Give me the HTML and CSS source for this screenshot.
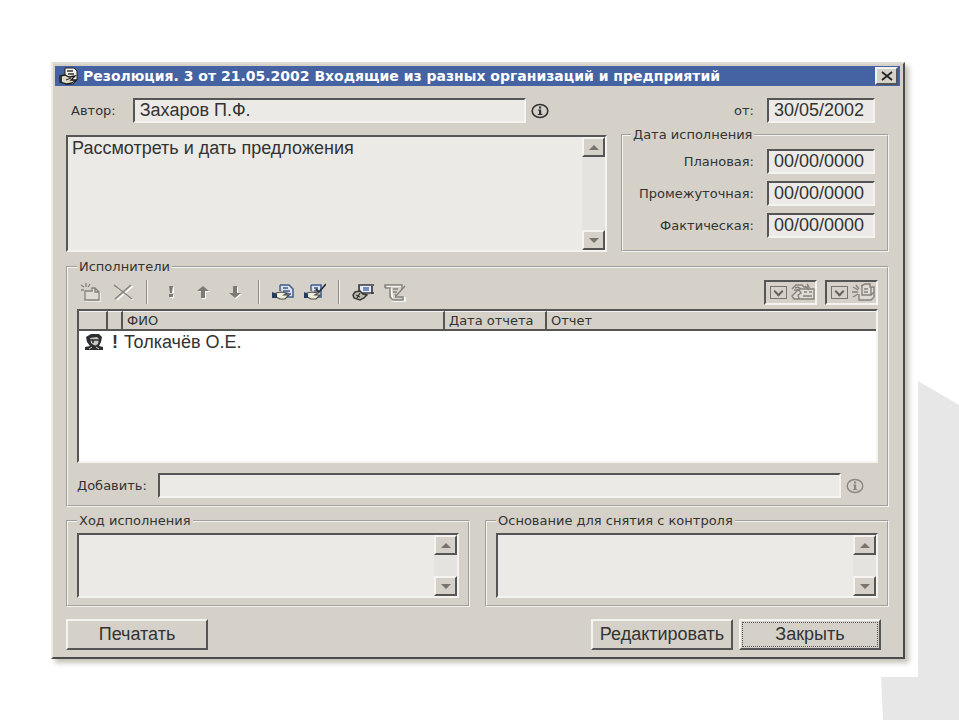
FILE: index.html
```html
<!DOCTYPE html>
<html lang="ru">
<head>
    <meta charset="UTF-8">
    <meta name="viewport" content="width=device-width, initial-scale=1.0">
    <title>Резолюция</title>
    <link rel="stylesheet" href="styles.css">
</head>
<body>
    <svg class="corner" viewBox="0 0 78 339" aria-hidden="true">
        <path d="M37 0L78 24V339H2L0 296H37z" fill="#e7e7e7"/>
    </svg>

    <div class="window">
        <div class="title-bar">
            <svg class="title-icon" viewBox="0 0 20 18" aria-hidden="true">
                <path d="M6 1h9l3 3v9l-4 4H6z" fill="#f4f2e8" stroke="#222" stroke-width="1"/>
                <path d="M8 4h6M9 7h6" fill="none" stroke="#333" stroke-width="1.3"/>
                <path d="M1 9l5-1 4 2 6-1-4 4h5l-4 3-5 1-7-2z" fill="#ddd9c5" stroke="#1c1c1c" stroke-width="1.3"/>
                <path d="M7 13l5-2" stroke="#1c1c1c" stroke-width="1"/>
                <path d="M0 9h3v6H0z" fill="#2d3442"/>
            </svg>
            <h1>Резолюция. 3 от 21.05.2002 Входящие из разных организаций и предприятий</h1>
            <button type="button" class="close" aria-label="Закрыть окно">
                <svg viewBox="0 0 12 10"><path d="M1 1l10 8M11 1L1 9" stroke="#222" stroke-width="1.8"/></svg>
            </button>
        </div>

        <form class="content">
            <div class="author-row">
                <label for="author">Автор:</label>
                <input type="text" id="author" class="author" value="Захаров П.Ф." readonly>
                <button type="button" class="info" aria-label="Информация об авторе">
                    <svg viewBox="0 0 18 16"><ellipse cx="9" cy="8" rx="7.8" ry="6.5" fill="none" stroke="currentColor" stroke-width="1.6"/><path d="M8 3.5h2.2v2H8zM7 6.5h3.2v4.5h1.2v1H6.8v-1H8V7.5H7z" fill="currentColor"/></svg>
                </button>
                <label for="date" class="from">от:</label>
                <input type="text" id="date" class="date" value="30/05/2002" readonly>
            </div>

            <div class="top">
                <div class="memo">
                    <textarea aria-label="Текст резолюции" readonly>Рассмотреть и дать предложения</textarea>
                    <div class="scroll">
                        <button type="button" aria-label="Вверх"><svg viewBox="0 0 10 5"><path d="M0 5l5-5 5 5z"/></svg></button>
                        <button type="button" aria-label="Вниз"><svg viewBox="0 0 10 5"><path d="M0 0h10L5 5z"/></svg></button>
                    </div>
                </div>
                <fieldset class="dates">
                    <legend>Дата исполнения</legend>
                    <div class="date-row">
                        <label for="plan">Плановая:</label>
                        <input type="text" id="plan" class="date" value="00/00/0000" readonly>
                    </div>
                    <div class="date-row">
                        <label for="middle">Промежуточная:</label>
                        <input type="text" id="middle" class="date" value="00/00/0000" readonly>
                    </div>
                    <div class="date-row">
                        <label for="fact">Фактическая:</label>
                        <input type="text" id="fact" class="date" value="00/00/0000" readonly>
                    </div>
                </fieldset>
            </div>

            <fieldset class="executors">
                <legend>Исполнители</legend>
                <div class="toolbar">
                    <button type="button" class="tool" aria-label="Создать">
                        <svg viewBox="0 0 22 20">
                            <path d="M5 9v10h14v-9l-4-4h-3v3z" fill="none" stroke="#fff" transform="translate(1 1)"/>
                            <path d="M5 9v9h14V10l-4-4h-3v3zM15 6v4h4" fill="#dedbd4" stroke="#85827c" stroke-width="1.3"/>
                            <path d="M6 1v4M1 3l3 2M10 2L8 5M1 8h3" stroke="#85827c" stroke-width="1.3"/>
                        </svg>
                    </button>
                    <button type="button" class="tool" aria-label="Удалить">
                        <svg viewBox="0 0 22 20">
                            <path d="M3 4l17 13M20 3L4 17" stroke="#fff" stroke-width="1.5" transform="translate(1 1)"/>
                            <path d="M2 3l18 14M19 3L3 17" stroke="#85827c" stroke-width="1.5"/>
                        </svg>
                    </button>
                    <span class="separator"></span>
                    <button type="button" class="tool" aria-label="Важно">
                        <svg viewBox="0 0 22 20">
                            <path d="M10 5h4v6h-4zM10 13h4v3h-4z" fill="#fff"/>
                            <path d="M9 4h4l-1 7h-2zM9 12h4v3H9z" fill="#7d7a75"/>
                        </svg>
                    </button>
                    <button type="button" class="tool" aria-label="Переместить вверх">
                        <svg viewBox="0 0 22 20">
                            <path d="M12 5l6 5h-4v7h-4v-7H6z" fill="#fff"/>
                            <path d="M11 4l6 5h-4v7H9V9H5z" fill="#7d7a75"/>
                        </svg>
                    </button>
                    <button type="button" class="tool" aria-label="Переместить вниз">
                        <svg viewBox="0 0 22 20">
                            <path d="M12 17l6-5h-4V5h-4v7H6z" fill="#fff"/>
                            <path d="M11 16l6-5h-4V4H9v7H5z" fill="#7d7a75"/>
                        </svg>
                    </button>
                    <span class="separator"></span>
                    <button type="button" class="tool" aria-label="Передать документ">
                        <svg viewBox="0 0 22 20">
                            <path d="M8 3h9l4 4v8h-7" fill="#dce3ef" stroke="#3d5b8d" stroke-width="1.5"/>
                            <path d="M8 3v6M11 6h5M11 9h7M14 12h5" stroke="#3d5b8d" stroke-width="1.4"/>
                            <path d="M4 11l5-1 6 1-3 2h5l-4 4H8l-4-2z" fill="#efedda" stroke="#4a4b48" stroke-width="1.2"/>
                            <path d="M0 10l5 2v4H0z" fill="#263a5c"/>
                        </svg>
                    </button>
                    <button type="button" class="tool" aria-label="Передать и подписать">
                        <svg viewBox="0 0 22 20">
                            <path d="M7 3h10v12h-5" fill="#dce3ef" stroke="#3d5b8d" stroke-width="1.5"/>
                            <path d="M7 3v6M10 6h4M10 9h4" stroke="#3d5b8d" stroke-width="1.4"/>
                            <path d="M3 11l5-1 6 1-3 2h5l-4 4H7l-4-2z" fill="#efedda" stroke="#4a4b48" stroke-width="1.2"/>
                            <path d="M0 10l4 2v4H0z" fill="#263a5c"/>
                            <path d="M22 2l-7 8-3-3" fill="none" stroke="#2b2e33" stroke-width="1.8"/>
                        </svg>
                    </button>
                    <span class="separator"></span>
                    <button type="button" class="tool" aria-label="Отчет исполнителя">
                        <svg viewBox="0 0 22 20">
                            <path d="M7 3h14v9H10z" fill="#e8edf6"/>
                            <path d="M22 3H7v7M10 11h12M20 4v8" fill="none" stroke="#363b44" stroke-width="1.7"/>
                            <path d="M11 6h6M11 8h6" stroke="#4d70ad" stroke-width="1.4"/>
                            <path d="M3 10l5-1 3 3 4 1-3 3-4 2-6-2-1-3z" fill="#bebcb0" stroke="#363633" stroke-width="1.5"/>
                            <path d="M4 13l4 2M8 11l-3 5" stroke="#363633" stroke-width="1.3"/>
                        </svg>
                    </button>
                    <button type="button" class="tool" aria-label="Изменить отчет">
                        <svg viewBox="0 0 22 20">
                            <path d="M2 3h15v2M4 3v3h2l2 12h12v-3h-3" fill="none" stroke="#fff" stroke-width="1.5" transform="translate(1 1)"/>
                            <path d="M1 6V3h17v4M4 6h2v9l3 3h10v-3h-8M1 6h3" fill="none" stroke="#85827c" stroke-width="1.5"/>
                            <path d="M21 4l-9 10-1-2M9 7h5M9 10h4" fill="none" stroke="#85827c" stroke-width="1.4"/>
                        </svg>
                    </button>
                    <div class="toggles">
                        <label class="toggle">
                            <input type="checkbox" aria-label="Показать карточку" checked>
                            <svg viewBox="0 0 24 18" aria-hidden="true">
                                <path d="M1 6l4-4h6l2 2h5l-2-3M8 6h15v10H3l-2-3z" fill="#dedbd4" stroke="#85827c" stroke-width="1.4"/>
                                <path d="M3 7h5l2 3-3 2 1 4M4 5l3-1 3 2M13 9h3M18 9h3M12 13h9M14 3l4 4" fill="none" stroke="#85827c" stroke-width="1.4"/>
                            </svg>
                        </label>
                        <label class="toggle">
                            <input type="checkbox" aria-label="Показать связки" checked>
                            <svg viewBox="0 0 24 18" aria-hidden="true">
                                <path d="M9 3l4-2h5v3h4v10l-3 3H7v-6" fill="#dedbd4" stroke="#85827c" stroke-width="1.4"/>
                                <path d="M10 2v10h9V4M19 12l3-3M12 6h4M12 9h4M1 4l5 3M0 9h6M1 14l5-3M4 2l3 4" fill="none" stroke="#85827c" stroke-width="1.4"/>
                            </svg>
                        </label>
                    </div>
                </div>

                <div class="list">
                    <table>
                        <colgroup>
                            <col class="col-icon">
                            <col class="col-mark">
                            <col class="col-name">
                            <col class="col-date">
                            <col>
                        </colgroup>
                        <thead>
                            <tr>
                                <th></th>
                                <th></th>
                                <th>ФИО</th>
                                <th>Дата отчета</th>
                                <th>Отчет</th>
                            </tr>
                        </thead>
                        <tbody>
                            <tr>
                                <td>
                                    <svg class="person" viewBox="0 0 20 18" aria-hidden="true">
                                        <path d="M2 4l5-3h8l3 3-1 5-2 4 4 1v3H1v-3l5-1-3-4z" fill="#2c2e31"/>
                                        <path d="M6 5l7-1 2 2-1 5-3 2-4-3z" fill="#c9c8c2"/>
                                        <path d="M4 7h12M9 7v3M7 14l3-1 3 1" stroke="#2c2e31" stroke-width="1.6"/>
                                        <path d="M5 16l3-2M15 16l-3-2" stroke="#d6d6d0" stroke-width="1"/>
                                    </svg>
                                </td>
                                <td class="mark">!</td>
                                <td>Толкачёв О.Е.</td>
                                <td></td>
                                <td></td>
                            </tr>
                        </tbody>
                    </table>
                </div>

                <div class="add-row">
                    <label for="add">Добавить:</label>
                    <input type="text" id="add">
                    <button type="button" class="info" aria-label="Справочник" disabled>
                        <svg viewBox="0 0 18 16"><ellipse cx="9" cy="8" rx="7.8" ry="6.5" fill="none" stroke="currentColor" stroke-width="1.4"/><path d="M8 3.5h2.2v2H8zM7 6.5h3.2v4.5h1.2v1H6.8v-1H8V7.5H7z" fill="currentColor"/></svg>
                    </button>
                </div>
            </fieldset>

            <div class="bottom">
                <fieldset>
                    <legend>Ход исполнения</legend>
                    <div class="memo small">
                        <textarea aria-label="Ход исполнения" readonly></textarea>
                        <div class="scroll">
                            <button type="button" aria-label="Вверх"><svg viewBox="0 0 10 5"><path d="M0 5l5-5 5 5z"/></svg></button>
                            <button type="button" aria-label="Вниз"><svg viewBox="0 0 10 5"><path d="M0 0h10L5 5z"/></svg></button>
                        </div>
                    </div>
                </fieldset>
                <fieldset>
                    <legend>Основание для снятия с контроля</legend>
                    <div class="memo small">
                        <textarea aria-label="Основание для снятия с контроля" readonly></textarea>
                        <div class="scroll">
                            <button type="button" aria-label="Вверх"><svg viewBox="0 0 10 5"><path d="M0 5l5-5 5 5z"/></svg></button>
                            <button type="button" aria-label="Вниз"><svg viewBox="0 0 10 5"><path d="M0 0h10L5 5z"/></svg></button>
                        </div>
                    </div>
                </fieldset>
            </div>

            <div class="actions">
                <button type="button" class="btn print">Печатать</button>
                <button type="button" class="btn">Редактировать</button>
                <button type="button" class="btn focused">Закрыть</button>
            </div>
        </form>
    </div>
</body>
</html>
```
FILE: styles.css
```css
* {
    box-sizing: border-box;
}

body {
    margin: 0;
    padding: 62px 54px 16px 51px;
    min-height: 100vh;
    background-color: #fff;
    color: #333;
    font-family: "DejaVu Sans", Verdana, sans-serif;
    font-size: 13px;
    line-height: 16px;
}

/* grey shape in the corner of the slide */
.corner {
    position: absolute;
    right: 0;
    bottom: 0;
    width: 78px;
    height: 339px;
}

.window {
    position: relative;
    padding: 2px 3px 7px 2px;
    background-color: #d5d1c9;
    border: 2px solid;
    border-color: #dedcd6 #4b4b4b #4b4b4b #eeece6;
    box-shadow: 4px 4px 5px #c4c2b8;
}

.title-bar {
    display: flex;
    align-items: center;
    gap: 4px;
    height: 20px;
    padding: 0 2px 0 4px;
    background-color: #4562a2;
}

.title-icon {
    width: 20px;
    height: 18px;
}

h1 {
    flex: 1;
    margin: 0;
    overflow: hidden;
    color: #fff;
    font-size: 14px;
    line-height: 20px;
    white-space: nowrap;
}

button {
    padding: 0;
    color: #333;
    font-family: inherit;
    background-color: #d5d1c9;
    border: 2px solid;
    border-color: #f4f3ef #555 #555 #f4f3ef;
}

button svg {
    display: block;
    margin: auto;
}

.close {
    width: 23px;
    height: 18px;
}

.close svg {
    width: 12px;
    height: 10px;
}

.content {
    padding: 12px 11px 0;
}

input[type="text"],
.memo textarea,
td,
.btn {
    font-family: "Liberation Sans", Arial, sans-serif;
    font-size: 18px;
}

input[type="text"] {
    min-width: 0;
    height: 25px;
    padding: 0 5px;
    color: #333;
    background-color: #ebeae6;
    border: 2px solid;
    border-color: #555 #f4f3ef #f4f3ef #555;
    border-radius: 0;
}

.author-row {
    display: flex;
    align-items: center;
    padding: 0 14px 0 5px;
}

.author-row .author {
    width: 393px;
    margin-left: 17px;
}

.info {
    width: 20px;
    margin-left: 4px;
    background: none;
    border: none;
}

.info svg {
    width: 18px;
    height: 16px;
}

.info:disabled {
    color: #8a8782;
}

.from {
    margin-left: auto;
}

.date {
    width: 108px;
    margin-left: 13px;
}

.top {
    display: grid;
    grid-template-columns: 1fr 268px;
    gap: 14px;
    margin-top: 4px;
}

.memo {
    display: flex;
    margin-top: 8px;
    background-color: #ebeae6;
    border: 2px solid;
    border-color: #555 #f4f3ef #f4f3ef #555;
}

.memo textarea {
    flex: 1;
    min-width: 0;
    padding: 2px 4px;
    color: #333;
    line-height: 18px;
    background: none;
    border: none;
    resize: none;
}

.scroll {
    display: flex;
    flex-direction: column;
    justify-content: space-between;
    width: 23px;
    background-color: #e5e3df;
}

.scroll button {
    height: 20px;
}

.scroll svg {
    width: 10px;
    height: 5px;
    fill: #77746f;
}

fieldset {
    min-width: 0;
    margin: 0;
    padding: 4px 9px 7px;
    border: 2px groove #f4f3ef;
}

legend {
    padding: 0 2px;
}

.dates {
    display: flex;
    flex-direction: column;
    gap: 7px;
    padding: 6px 12px 12px 8px;
}

.date-row {
    display: flex;
    align-items: center;
    justify-content: flex-end;
}

.executors {
    margin-top: 7px;
}

.toolbar {
    display: flex;
    align-items: center;
    gap: 4px;
    height: 26px;
}

.tool {
    width: 28px;
    height: 24px;
    background: none;
    border: none;
}

.tool svg {
    width: 22px;
    height: 20px;
}

.separator {
    width: 2px;
    height: 24px;
    margin: 0 5px;
    background-color: #8f8c87;
    border-right: 1px solid #f4f3ef;
}

.toggles {
    display: flex;
    gap: 8px;
    margin-left: auto;
}

.toggle {
    display: flex;
    align-items: center;
    gap: 4px;
    width: 53px;
    height: 25px;
    padding-left: 4px;
    border: 2px solid;
    border-color: #555 #f4f3ef #f4f3ef #555;
}

.toggle input {
    width: 17px;
    height: 13px;
    margin: 0;
    appearance: none;
    border: 1px solid #77746f;
}

.toggle input:checked::before {
    content: "";
    display: block;
    width: 5px;
    height: 5px;
    margin: 1px auto;
    border: solid #66635f;
    border-width: 0 2px 2px 0;
    transform: rotate(45deg);
}

.toggle svg {
    width: 24px;
    height: 18px;
}

.list {
    height: 154px;
    margin-top: 4px;
    background-color: #fff;
    border: 2px solid;
    border-color: #555 #f4f3ef #f4f3ef #555;
}

table {
    width: 100%;
    table-layout: fixed;
    border-collapse: separate;
    border-spacing: 0;
}

.col-icon {
    width: 29px;
}

.col-mark {
    width: 15px;
}

.col-name {
    width: 322px;
}

.col-date {
    width: 102px;
}

th {
    height: 20px;
    padding: 0 4px;
    font-weight: normal;
    text-align: left;
    white-space: nowrap;
    background-color: #d5d1c9;
    border-top: 1px solid #f4f3ef;
    border-right: 2px solid #555;
    border-bottom: 2px solid #555;
}

th:last-child {
    border-right: none;
}

td {
    height: 22px;
    padding: 0 1px;
}

.mark {
    padding: 0 4px;
    font-weight: bold;
}

.person {
    display: block;
    width: 20px;
    height: 18px;
    margin-left: 4px;
}

.add-row {
    display: flex;
    align-items: center;
    margin-top: 10px;
    padding-right: 13px;
}

.add-row input {
    flex: 1;
    margin-left: 11px;
}

.bottom {
    display: grid;
    grid-template-columns: 1fr 1fr;
    gap: 15px;
    margin-top: 6px;
}

.small {
    height: 65px;
    margin-top: 0;
}

.actions {
    display: flex;
    gap: 6px;
    margin-top: 12px;
    padding-right: 8px;
}

.btn {
    width: 142px;
    height: 31px;
}

.print {
    margin-right: auto;
}

.focused {
    outline: 1px dotted #555;
    outline-offset: -4px;
}
```
